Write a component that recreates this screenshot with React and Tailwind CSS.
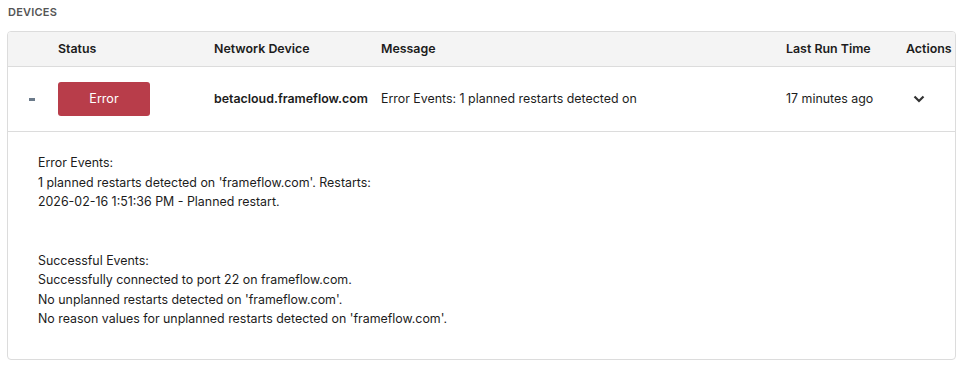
import React from "react";

const cols = "grid grid-cols-[42px_156px_167px_405px_120px_1fr]";

const details = [
  "Error Events:",
  "1 planned restarts detected on 'frameflow.com'. Restarts:",
  "2026-02-16 1:51:36 PM - Planned restart.",
  "",
  "",
  "Successful Events:",
  "Successfully connected to port 22 on frameflow.com.",
  "No unplanned restarts detected on 'frameflow.com'.",
  "No reason values for unplanned restarts detected on 'frameflow.com'.",
];

function App() {
  return (
    <div className="bg-white w-[965px] h-[366px] font-['Inter',sans-serif] text-[#1c1c1c]">
      <div className="px-2 pt-[6px] pb-[12px] text-[11px] font-semibold tracking-[0.02em] text-[#555] leading-[13px]">
        DEVICES
      </div>
      <div className="ml-[7px] w-[949px] border border-[#dcdcdc] rounded-[4px] overflow-hidden">
        {/* header */}
        <div className={`${cols} h-[35px] items-center bg-[#f4f4f4] border-b border-[#dcdcdc] text-[12.4px] font-semibold`}>
          <div />
          <div className="pl-2">Status</div>
          <div className="pl-2">Network Device</div>
          <div className="pl-2">Message</div>
          <div className="pl-2">Last Run Time</div>
          <div className="pl-2">Actions</div>
        </div>

        {/* row */}
        <div className={`${cols} h-[65px] items-center border-b border-[#dcdcdc] text-[12.4px]`}>
          <div className="pl-[21px]">
            <div className="w-[6px] h-[3px] bg-[#6b7a8a]" />
          </div>
          <div className="pl-2">
            <div className="w-[92px] h-[34px] rounded-[3px] bg-[#b83d4a] text-white text-[12.6px] flex items-center justify-center">
              Error
            </div>
          </div>
          <div className="pl-2 font-semibold">betacloud.frameflow.com</div>
          <div className="pl-2">Error Events: 1 planned restarts detected on</div>
          <div className="pl-2">17 minutes ago</div>
          <div className="pl-[15px]">
            <svg width="12" height="8" viewBox="0 0 12 8" fill="none">
              <path d="M1.5 1.5 L6 6 L10.5 1.5" stroke="#333" strokeWidth="2.2" />
            </svg>
          </div>
        </div>

        {/* expanded details */}
        <div className="pl-[30px] pt-[21px] pb-[30px] text-[12.4px] leading-[19.5px]">
          {details.map((line, i) => (
            <div key={i} className="h-[19.5px]">
              {line}
            </div>
          ))}
        </div>
      </div>
    </div>
  );
}

export default App;
